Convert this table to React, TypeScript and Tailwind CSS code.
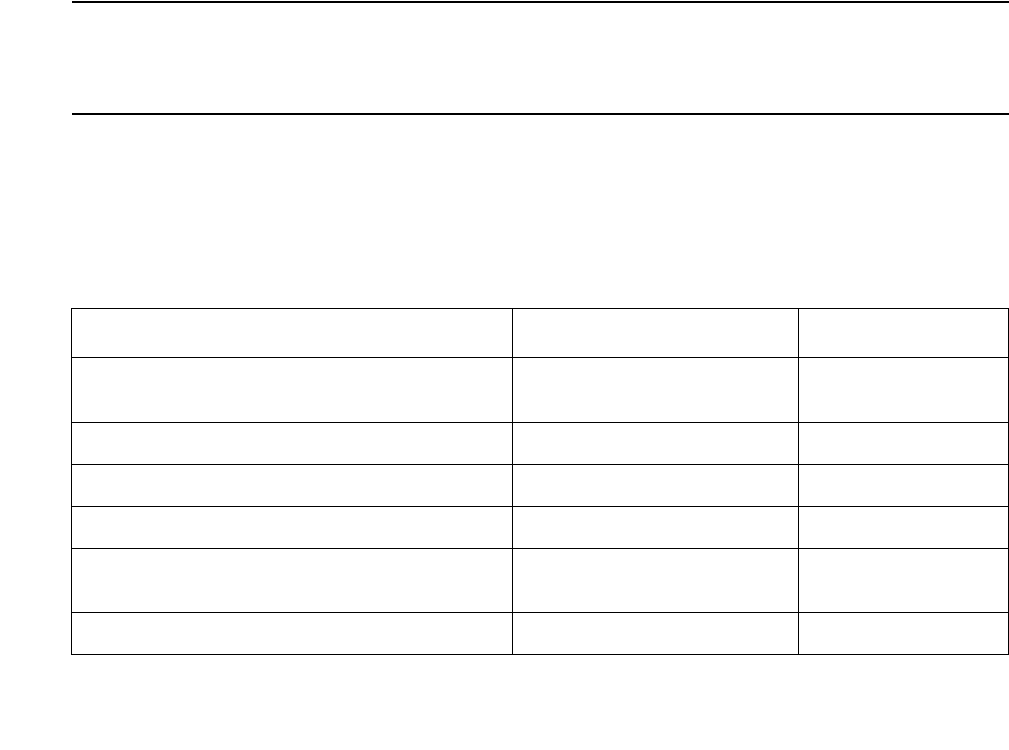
const rows: { h: string }[] = [
  { h: "h-[49px]" },
  { h: "h-[65px]" },
  { h: "h-[42px]" },
  { h: "h-[42px]" },
  { h: "h-[42px]" },
  { h: "h-[64px]" },
  { h: "h-[42px]" },
];

const cols = ["w-[441px]", "w-[286px]", "w-[210px]"];

export default function App() {
  return (
    <div className="min-h-[750px] w-[1009px] bg-white font-['Liberation_Sans',Arial,sans-serif] text-black">
      {/* header band between two rules */}
      <div className="mt-px ml-[72px] h-[114px] w-[937px] border-y-2 border-black" />

      {/* table */}
      <div className="mt-[193px] ml-[71px] flex w-[938px] flex-col border-t border-l border-black">
        {rows.map((row, i) => (
          <div key={i} className="flex">
            {cols.map((w, j) => (
              <div key={j} className={`${w} ${row.h} border-r border-b border-black`} />
            ))}
          </div>
        ))}
      </div>
    </div>
  );
}
